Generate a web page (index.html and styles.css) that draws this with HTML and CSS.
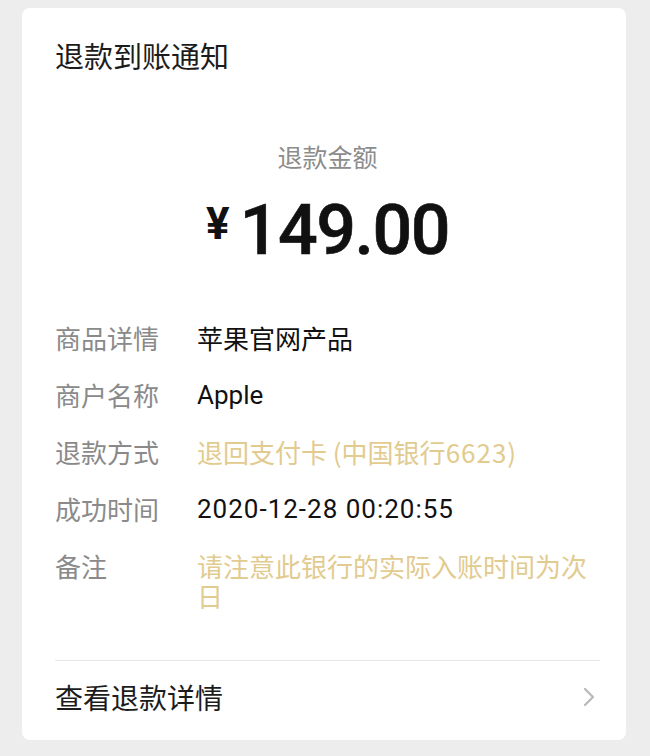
FILE: index.html
```html
<!DOCTYPE html>
<html lang="zh-CN">
<head>
<meta charset="utf-8">
<title>退款到账通知</title>
<link rel="stylesheet" href="styles.css">
</head>
<body>
<div class="page">
  <div class="card">
    <div class="title">退款到账通知</div>
    <div class="sub">退款金额</div>
    <div class="amount"><span class="yen">¥</span><span class="num">149.00</span></div>
    <div class="rows">
      <div class="row"><div class="label">商品详情</div><div class="value">苹果官网产品</div></div>
      <div class="row"><div class="label">商户名称</div><div class="value latin">Apple</div></div>
      <div class="row"><div class="label">退款方式</div><div class="value gold">退回支付卡 (中国银行<span class="digits">6623</span>)</div></div>
      <div class="row"><div class="label">成功时间</div><div class="value latin digits">2020-12-28 00:20:55</div></div>
      <div class="row"><div class="label">备注</div><div class="value gold">请注意此银行的实际入账时间为次日</div></div>
    </div>
    <div class="footer">
      <div class="footer-text">查看退款详情</div>
      <svg class="chev" width="14" height="22" viewBox="0 0 14 22"><path d="M3 3 L11 11 L3 19" fill="none" stroke="#b8b8b8" stroke-width="2.2" stroke-linecap="round" stroke-linejoin="round"/></svg>
    </div>
  </div>
</div>
</body>
</html>
```

FILE: styles.css
```css
html, body {
  margin: 0;
  padding: 0;
  background: #ededed;
}
body {
  font-family: "Noto Sans CJK SC", "Noto Sans", sans-serif;
}
.page {
  padding: 8px 24px 16px 22px;
}
.card {
  background: #ffffff;
  border-radius: 8px;
  padding: 27px 26px 0 33px;
  height: 732px;
  box-sizing: border-box;
  display: flex;
  flex-direction: column;
}
.title {
  font-size: 29px;
  line-height: 40px;
  color: #1c1c1c;
}
.sub {
  margin-top: 63px;
  text-align: center;
  font-size: 25px;
  line-height: 36px;
  color: #8c8c8c;
}
.amount {
  margin-top: 16px;
  height: 80px;
  display: flex;
  justify-content: center;
  align-items: center;
  color: #111111;
}
.yen {
  font-family: "Roboto", "Noto Sans", sans-serif;
  font-weight: 700;
  font-size: 44px;
  line-height: 44px;
  align-self: flex-start;
  margin-top: 12px;
  margin-right: 10px;
}
.num {
  font-family: "Roboto", "Noto Sans", sans-serif;
  font-weight: 500;
  font-size: 70px;
  line-height: 80px;
  letter-spacing: -1.5px;
  -webkit-text-stroke: 0.6px #111111;
}
.rows {
  margin-top: 53px;
  display: flex;
  flex-direction: column;
  gap: 27px;
}
.row {
  display: flex;
  font-size: 26px;
  line-height: 30px;
}
.label {
  width: 142px;
  flex: none;
  color: #8a8a8a;
}
.value {
  flex: 1;
  color: #111111;
}
.latin {
  font-family: "Roboto", "Noto Sans CJK SC", sans-serif;
}
.digits {
  letter-spacing: 1px;
}
.gold {
  color: #e2cb8f;
}
.footer {
  margin-top: 49px;
  border-top: 1px solid #e6e6e6;
  padding: 16px 4px 22px 0;
  display: flex;
  align-items: center;
  justify-content: space-between;
}
.footer-text {
  font-size: 28px;
  line-height: 40px;
  color: #1c1c1c;
}
.chev {
  display: block;
}
```
